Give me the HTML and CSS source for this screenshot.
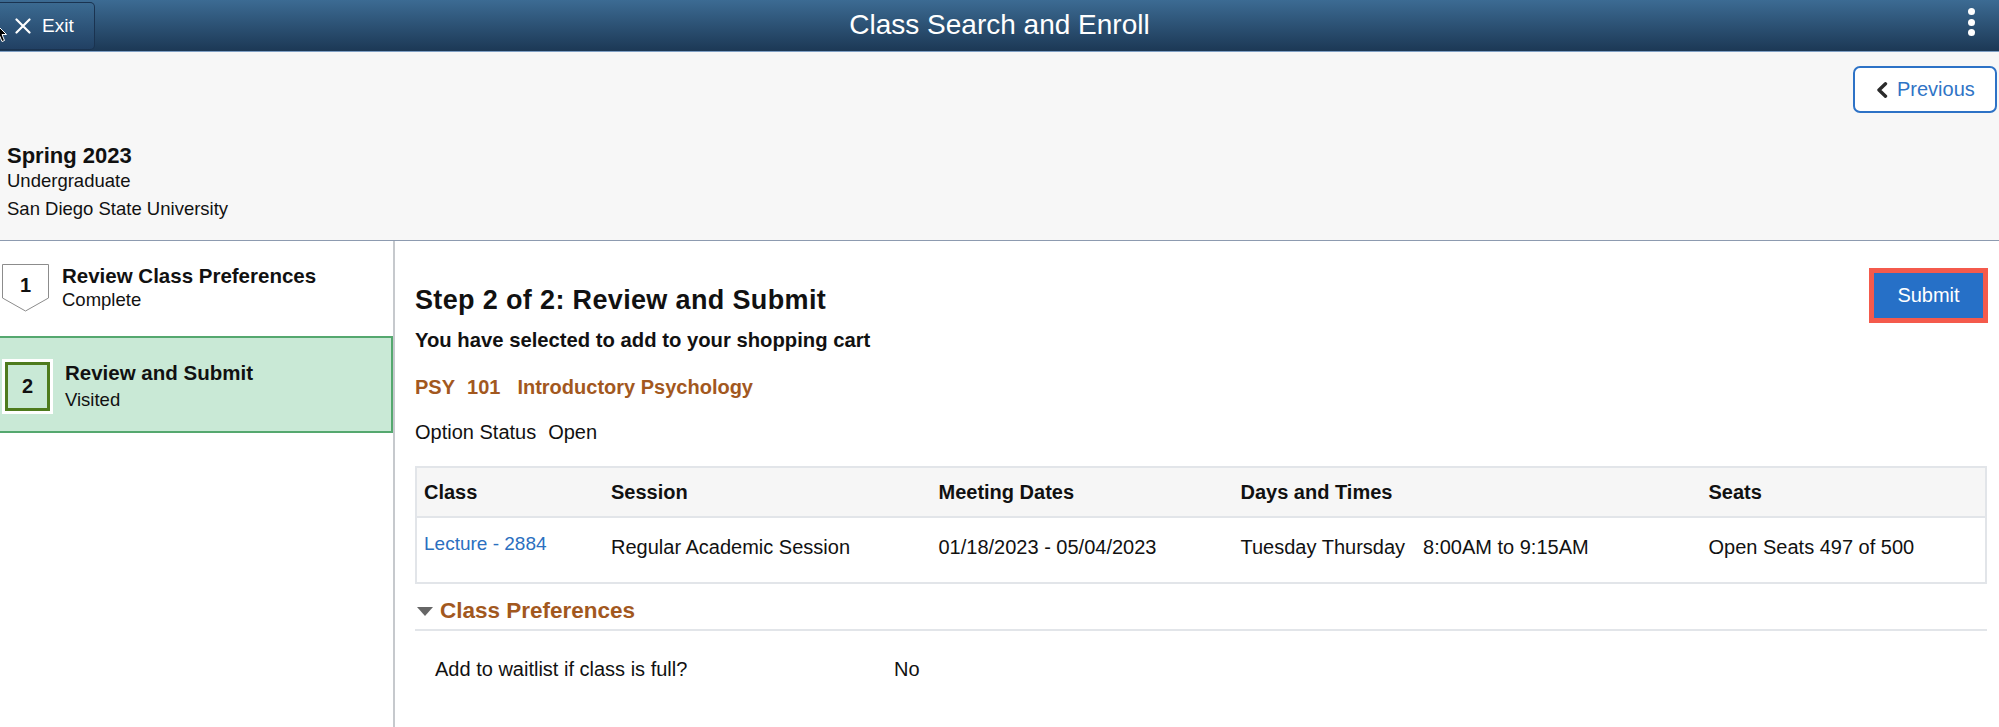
FILE: index.html
```html
<!DOCTYPE html>
<html lang="en">
<head>
<meta charset="utf-8">
<title>Class Search and Enroll</title>
<link rel="stylesheet" href="styles.css">
</head>
<body>
<header class="topbar">
  <div class="tb-left">
    <button class="exit-btn" type="button">
      <svg class="x-icon" viewBox="0 0 16 16" width="16" height="16"><path d="M1.5 1.5L14.5 14.5M14.5 1.5L1.5 14.5" stroke="#fff" stroke-width="2.2" stroke-linecap="round" fill="none"/></svg>
      <span>Exit</span>
    </button>
  </div>
  <h1 class="tb-title">Class Search and Enroll</h1>
  <div class="tb-right">
    <div class="kebab"><span></span><span></span><span></span></div>
  </div>
  <svg class="cursor" viewBox="0 0 12 20" width="12" height="20"><path d="M1 1L1 16L4.5 12.5L7 18.5L9.5 17.5L7 11.5L11.5 11.5Z" fill="#000" stroke="#fff" stroke-width="1"/></svg>
</header>

<section class="banner">
  <div class="banner-actions">
    <button class="prev-btn" type="button">
      <svg class="chev" viewBox="0 0 12 16" width="12" height="16"><path d="M9.5 1.8L3 8L9.5 14.2" stroke="#2b2b2b" stroke-width="3.4" fill="none" stroke-linecap="round" stroke-linejoin="round"/></svg>
      <span>Previous</span>
    </button>
  </div>
  <div class="term">
    <div class="term-name">Spring 2023</div>
    <div class="term-career">Undergraduate</div>
    <div class="term-inst">San Diego State University</div>
  </div>
</section>

<div class="layout">
  <nav class="steps">
    <div class="step step-done">
      <svg class="step-badge" viewBox="0 0 47 48" width="47" height="48">
        <polygon points="0.5,0.5 46.5,0.5 46.5,34 23.5,47 0.5,34" fill="#fff" stroke="#8c8c8c" stroke-width="1"/>
        <text x="23.5" y="28" text-anchor="middle" font-family="Liberation Sans, Arial, sans-serif" font-weight="bold" font-size="20" fill="#111">1</text>
      </svg>
      <div class="step-text">
        <div class="step-title">Review Class Preferences</div>
        <div class="step-status">Complete</div>
      </div>
    </div>
    <div class="step step-current">
      <div class="step-box"><div class="step-box-inner">2</div></div>
      <div class="step-text">
        <div class="step-title">Review and Submit</div>
        <div class="step-status">Visited</div>
      </div>
    </div>
  </nav>

  <main class="content">
    <div class="content-top">
      <div class="content-head">
        <h2 class="page-title">Step 2 of 2: Review and Submit</h2>
        <p class="subtitle">You have selected to add to your shopping cart</p>
      </div>
      <div class="submit-highlight"><button class="submit-btn" type="button">Submit</button></div>
    </div>

    <p class="course"><span class="c-subj">PSY</span><span class="c-num">101</span><span>Introductory Psychology</span></p>
    <p class="option"><span class="opt-label">Option Status</span><span>Open</span></p>

    <div class="class-table">
      <div class="row row-head">
        <div class="cell">Class</div>
        <div class="cell">Session</div>
        <div class="cell">Meeting Dates</div>
        <div class="cell">Days and Times</div>
        <div class="cell">Seats</div>
      </div>
      <div class="row row-body">
        <div class="cell cell-link"><a href="#">Lecture - 2884</a></div>
        <div class="cell">Regular Academic Session</div>
        <div class="cell">01/18/2023 - 05/04/2023</div>
        <div class="cell"><span class="days">Tuesday Thursday</span>8:00AM to 9:15AM</div>
        <div class="cell">Open Seats 497 of 500</div>
      </div>
    </div>

    <div class="prefs-head">
      <span class="tri"></span>
      <span class="prefs-title">Class Preferences</span>
    </div>
    <div class="pref-row">
      <span class="pref-label">Add to waitlist if class is full?</span>
      <span class="pref-value">No</span>
    </div>
  </main>
</div>
</body>
</html>
```

FILE: styles.css
```css
* { box-sizing: border-box; margin: 0; padding: 0; }
html, body { width: 1999px; height: 727px; overflow: hidden; }
body {
  font-family: "Liberation Sans", Arial, sans-serif;
  font-size: 18.5px;
  color: #111;
  background: #fff;
}

/* ---------- top bar ---------- */
.topbar {
  position: relative;
  height: 52px;
  display: grid;
  grid-template-columns: 1fr auto 1fr;
  background: linear-gradient(#3c6b93, #1c3855);
  border-bottom: 1px solid #7f9fc4;
}
.tb-left { display: flex; align-items: flex-start; }
.exit-btn {
  margin-top: 2px;
  height: 48px;
  width: 95px;
  display: flex;
  align-items: center;
  gap: 11px;
  padding-left: 15px;
  background: linear-gradient(#3b6a91, #214063);
  border: 1px solid #1a3350;
  border-left: none;
  border-radius: 0 5px 5px 0;
  color: #fff;
  font: 19px "Liberation Sans", Arial, sans-serif;
}
.x-icon { display: block; }
.tb-title {
  font-size: 28px;
  font-weight: normal;
  line-height: 50px;
  color: #fff;
}
.tb-right { display: flex; justify-content: flex-end; }
.kebab {
  margin-right: 24px;
  padding-top: 8px;
  display: flex;
  flex-direction: column;
  gap: 3.5px;
}
.kebab span {
  width: 7px;
  height: 7px;
  border-radius: 50%;
  background: #fff;
}
.cursor { position: absolute; left: -5px; top: 23px; }

/* ---------- banner ---------- */
.banner {
  background: #f7f7f7;
  border-bottom: 1px solid #8d9bb0;
  padding: 14px 2px 15px 7px;
}
.banner-actions { display: flex; justify-content: flex-end; }
.prev-btn {
  width: 144px;
  height: 47px;
  display: flex;
  align-items: center;
  gap: 9px;
  padding-left: 21px;
  background: #fff;
  border: 2px solid #2d72c6;
  border-radius: 7px;
  color: #2f74c6;
  font: 20px "Liberation Sans", Arial, sans-serif;
}
.chev { display: block; }
.term { margin-top: 30px; }
.term-name { font-size: 22px; font-weight: bold; line-height: 26px; }
.term-career { line-height: 24px; }
.term-inst { line-height: 32px; }

/* ---------- layout ---------- */
.layout { display: flex; height: 486px; }
.steps {
  width: 395px;
  flex: 0 0 395px;
  border-right: 2px solid #c6c9cd;
}
.step { display: flex; }
.step-done { height: 95px; padding: 23px 0 0 2px; gap: 13px; }
.step-badge { display: block; flex: 0 0 47px; }
.step-title { font-size: 20.5px; font-weight: bold; line-height: 24px; }
.step-status { line-height: 24px; }
.step-current {
  height: 97px;
  background: #c9e9d6;
  border: 2px solid #55a86f;
  border-left-width: 0;
  padding: 21px 0 0 2px;
  gap: 12px;
}
.step-box {
  width: 51px;
  height: 55px;
  flex: 0 0 51px;
  background: #fff;
  padding: 3px;
}
.step-box-inner {
  width: 100%;
  height: 100%;
  border: 3px solid #4e7b1d;
  background: #c9e9d6;
  display: flex;
  align-items: center;
  justify-content: center;
  font-size: 20px;
  font-weight: bold;
}
.step-current .step-title { margin-top: 2px; }
.step-current .step-status { margin-top: 3px; }

/* ---------- content ---------- */
.content { flex: 1; padding: 0 12px 0 20px; font-size: 20px; }
.content-top { display: flex; justify-content: space-between; align-items: flex-start; }
.page-title {
  margin-top: 43px;
  font-size: 27px;
  letter-spacing: 0.35px;
  line-height: 32px;
  font-weight: bold;
}
.subtitle { margin-top: 11px; font-size: 20.25px; font-weight: bold; line-height: 26px; }
.submit-highlight {
  margin-top: 27px;
  margin-right: -1px;
  border: 5px solid #f45a4c;
}
.submit-btn {
  display: block;
  width: 109px;
  height: 45px;
  border: none;
  background: #2670c7;
  color: #fff;
  font: 20px "Liberation Sans", Arial, sans-serif;
}
.course {
  margin-top: 21px;
  line-height: 26px;
  font-weight: bold;
  color: #a2581e;
}
.c-subj { margin-right: 12px; }
.c-num { margin-right: 17px; }
.option { margin-top: 19px; line-height: 26px; }
.opt-label { margin-right: 12px; }

.class-table {
  margin-top: 21px;
  border: 2px solid #e2e5e9;
}
.row {
  display: grid;
  grid-template-columns: 187px 327.5px 302px 468px 1fr;
}
.row-head {
  height: 50px;
  background: #f6f6f6;
  border-bottom: 2px solid #e2e5e9;
  font-weight: bold;
}
.row-head .cell { line-height: 48px; padding-left: 7px; }
.row-body { height: 64px; }
.row-body .cell { padding: 16px 0 0 7px; line-height: 26px; }
.row-body .cell-link { padding-top: 13px; font-size: 19px; }
.cell-link a { color: #2b6fc0; text-decoration: none; }
.days { margin-right: 18px; }

.prefs-head {
  margin-top: 13px;
  padding: 0 0 4px 2px;
  border-bottom: 2px solid #e2e5e9;
  display: flex;
  align-items: center;
  gap: 7px;
}
.tri {
  width: 0;
  height: 0;
  border-left: 8px solid transparent;
  border-right: 8px solid transparent;
  border-top: 9px solid #666;
}
.prefs-title {
  font-size: 22.5px;
  font-weight: bold;
  line-height: 28px;
  color: #a2581e;
}
.pref-row {
  margin-top: 25px;
  padding-left: 20px;
  display: flex;
  line-height: 26px;
}
.pref-label { width: 459px; }
```
